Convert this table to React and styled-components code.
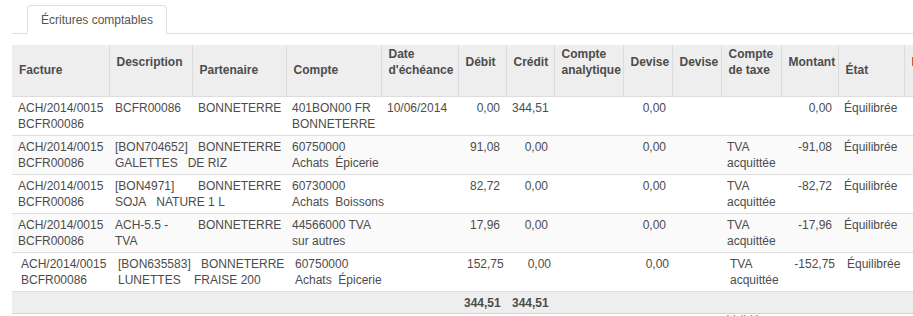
import React from "react";
import styled, { createGlobalStyle } from "styled-components";

const Global = createGlobalStyle`
  html, body { margin: 0; padding: 0; overflow: hidden; background: #fff; }
  body { font-family: "Liberation Sans", Arial, sans-serif; color: #4c4c4c; }
`;

const Page = styled.div`
  padding: 5px 0 0 12px;
  width: 1100px;
`;

const TabBar = styled.div`
  display: flex;
  padding-left: 15px;
  height: 28px;
  border-bottom: 1px solid #ddd;
`;

const Tab = styled.div`
  box-sizing: border-box;
  height: 29px;
  padding: 0 13px;
  line-height: 29px;
  font-size: 12px;
  color: #555;
  background: #fff;
  border: 1px solid #ddd;
  border-bottom-color: #fff;
  border-radius: 4px 4px 0 0;
`;

const Table = styled.table`
  margin-top: 11px;
  width: 992px;
  border-collapse: collapse;
  table-layout: fixed;
  font-size: 12px;
`;

const Th = styled.th`
  height: 51px;
  box-sizing: border-box;
  padding: 0 4px ${(p) => (p.$raised ? "16px" : "0")} 7px;
  background: #eee;
  border-right: 1px solid #dcdcdc;
  border-bottom: 1px solid #ddd;
  text-align: left;
  vertical-align: middle;
  font-weight: bold;
  line-height: 16px;
  color: ${(p) => p.$accent || "#4c4c4c"};
  white-space: nowrap;
  overflow: hidden;
`;

const Row = styled.tr`
  background: ${(p) => (p.$alt ? "#fafafa" : "#fff")};
`;

const Td = styled.td`
  padding: 3px ${(p) => (p.$nudge ? "3px" : "6px")} 3px ${(p) => (p.$nudge ? "9px" : "6px")};
  line-height: 16px;
  vertical-align: top;
  text-align: ${(p) => (p.$num ? "right" : "left")};
  border-bottom: 1px solid #ddd;
  white-space: nowrap;
  color: #4c4c4c;
`;

const Line = styled.span`
  display: block;
`;

const FootRow = styled.tr`
  background: #eee;
`;

const FootTd = styled.td`
  height: 16px;
  padding: 3px 9px 2px 6px;
  line-height: 16px;
  text-align: right;
  font-weight: bold;
  border-top: 1px solid #d4d4d4;
  border-bottom: 1px solid #d4d4d4;
  white-space: nowrap;
`;

const Note = styled.div`
  margin-left: 715px;
  font-size: 12px;
  line-height: 12px;
  color: #777;
`;

const widths = [97, 83, 94, 95, 77, 48, 48, 69, 49, 49, 60, 57, 66, 100];

const headers = [
  { label: ["Facture"] },
  { label: ["Description"], raised: true },
  { label: ["Partenaire"] },
  { label: ["Compte"] },
  { label: ["Date", "d'échéance"], raised: true },
  { label: ["Débit"], raised: true },
  { label: ["Crédit"], raised: true },
  { label: ["Compte", "analytique"], raised: true },
  { label: ["Devise"], raised: true },
  { label: ["Devise"], raised: true },
  { label: ["Compte", "de taxe"], raised: true },
  { label: ["Montant"], raised: true },
  { label: ["État"] },
  { label: ["Rapprochement"], raised: true, accent: "#a0322a" },
];

const sp = (n) => "\u00a0".repeat(n);
const facture = ["ACH/2014/0015", "BCFR00086"];
const tva = ["TVA", "acquittée"];

const rows = [
  { desc: ["BCFR00086"], compte: ["401BON00 FR", "BONNETERRE"], date: "10/06/2014", debit: "0,00", credit: "344,51", tax: [], montant: "0,00" },
  { desc: ["[BON704652]", `GALETTES${sp(3)}DE RIZ`], compte: ["60750000", `Achats${sp(2)}Épicerie`], date: "", debit: "91,08", credit: "0,00", tax: tva, montant: "-91,08" },
  { desc: ["[BON4971]", `SOJA${sp(3)}NATURE 1 L`], compte: ["60730000", `Achats${sp(2)}Boissons`], date: "", debit: "82,72", credit: "0,00", tax: tva, montant: "-82,72" },
  { desc: ["ACH-5.5 -", "TVA"], compte: ["44566000 TVA", "sur autres"], date: "", debit: "17,96", credit: "0,00", tax: tva, montant: "-17,96" },
  { desc: ["[BON635583]", `LUNETTES${sp(4)}FRAISE 200`], compte: ["60750000", `Achats${sp(2)}Épicerie`], date: "", debit: "152,75", credit: "0,00", tax: tva, montant: "-152,75", nudge: true },
];

const Lines = ({ items }) => items.map((t, i) => <Line key={i}>{t}</Line>);

export default function App() {
  return (
    <>
      <Global />
      <Page>
        <TabBar>
          <Tab>Écritures comptables</Tab>
        </TabBar>
        <Table>
          <colgroup>
            {widths.map((w, i) => (
              <col key={i} style={{ width: w }} />
            ))}
          </colgroup>
          <thead>
            <tr>
              {headers.map((h, i) => (
                <Th key={i} $raised={h.raised} $accent={h.accent}>
                  <Lines items={h.label} />
                </Th>
              ))}
            </tr>
          </thead>
          <tbody>
            {rows.map((r, i) => {
              const n = r.nudge;
              return (
                <Row key={i} $alt={i % 2 === 1}>
                  <Td $nudge={n}><Lines items={facture} /></Td>
                  <Td $nudge={n}><Lines items={r.desc} /></Td>
                  <Td $nudge={n}>BONNETERRE</Td>
                  <Td $nudge={n}><Lines items={r.compte} /></Td>
                  <Td $nudge={n}>{r.date}</Td>
                  <Td $nudge={n} $num>{r.debit}</Td>
                  <Td $nudge={n} $num>{r.credit}</Td>
                  <Td $nudge={n}></Td>
                  <Td $nudge={n} $num>0,00</Td>
                  <Td $nudge={n}></Td>
                  <Td $nudge={n}><Lines items={r.tax} /></Td>
                  <Td $nudge={n} $num>{r.montant}</Td>
                  <Td $nudge={n}>Équilibrée</Td>
                  <Td $nudge={n}></Td>
                </Row>
              );
            })}
            <FootRow>
              <FootTd />
              <FootTd />
              <FootTd />
              <FootTd />
              <FootTd />
              <FootTd>344,51</FootTd>
              <FootTd>344,51</FootTd>
              <FootTd />
              <FootTd />
              <FootTd />
              <FootTd />
              <FootTd />
              <FootTd />
              <FootTd />
            </FootRow>
          </tbody>
        </Table>
        <Note>Validé</Note>
      </Page>
    </>
  );
}
